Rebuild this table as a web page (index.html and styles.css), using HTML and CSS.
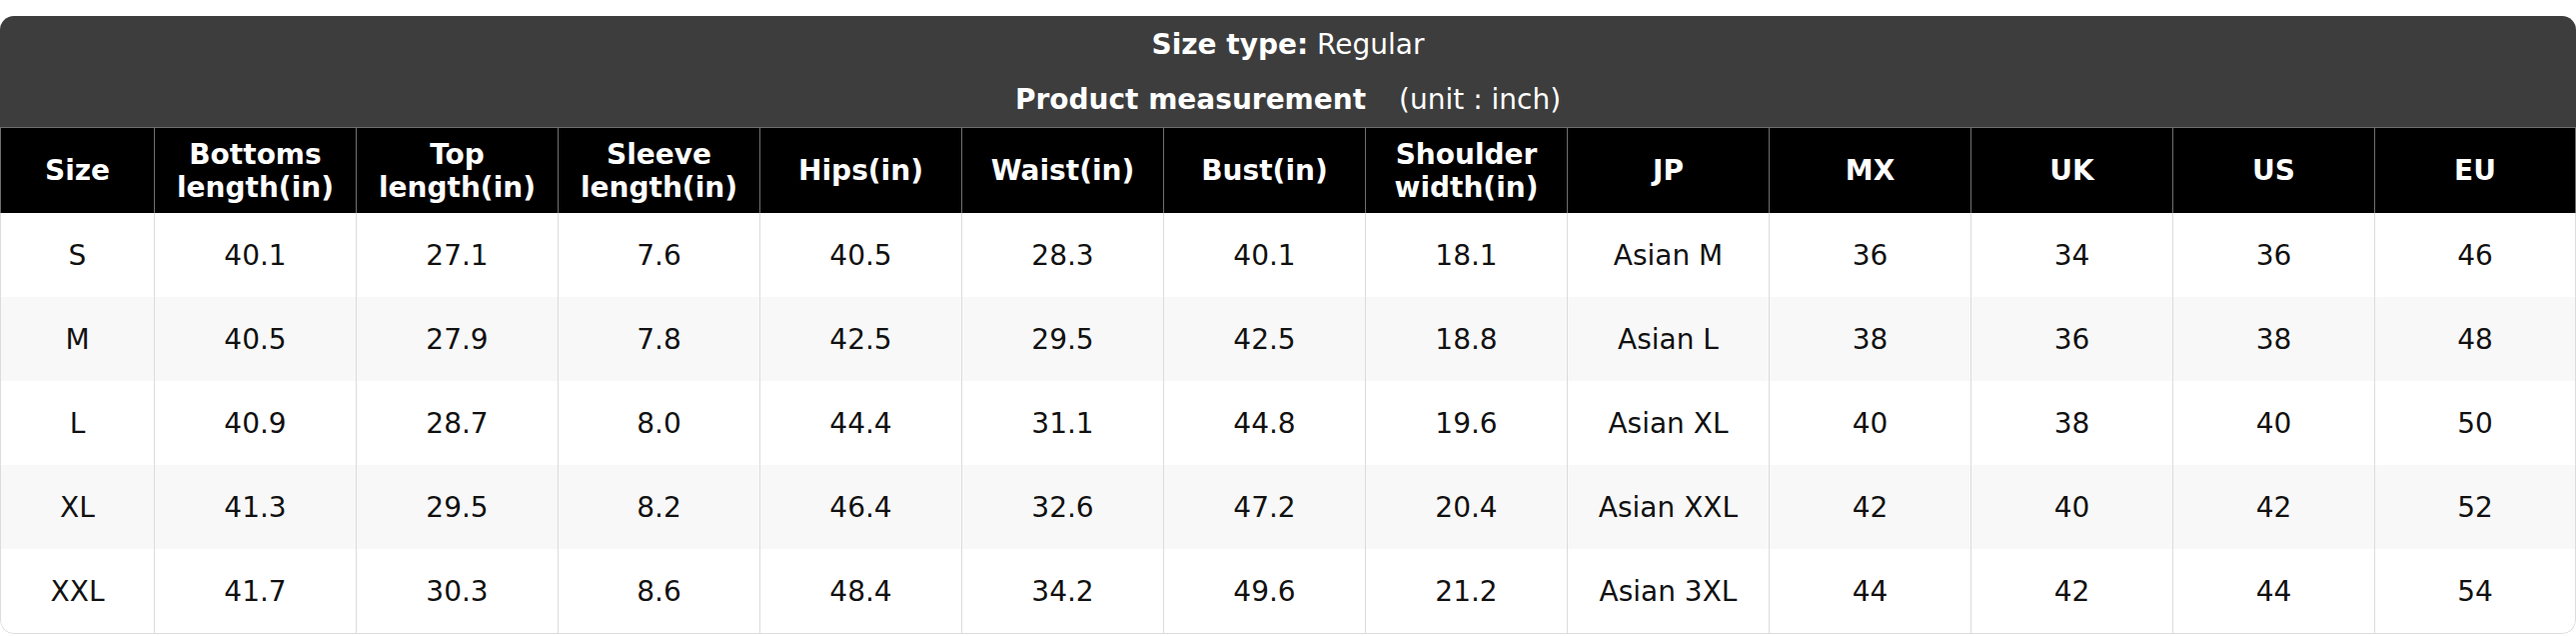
FILE: index.html
```html
<!DOCTYPE html>
<html lang="en">
<head>
<meta charset="utf-8">
<title>Size chart</title>
<link rel="stylesheet" href="styles.css">
</head>
<body>
<div class="chart">
  <div class="title-line first-line"><b>Size type:</b>&nbsp;Regular</div>
  <div class="title-line"><b>Product measurement</b><span class="unit">(unit : inch)</span></div>
  <table class="sizes">
    <thead>
      <tr>
        <th>Size</th>
        <th>Bottoms<br>length(in)</th>
        <th>Top<br>length(in)</th>
        <th>Sleeve<br>length(in)</th>
        <th>Hips(in)</th>
        <th>Waist(in)</th>
        <th>Bust(in)</th>
        <th>Shoulder<br>width(in)</th>
        <th>JP</th>
        <th>MX</th>
        <th>UK</th>
        <th>US</th>
        <th>EU</th>
      </tr>
    </thead>
    <tbody>
      <tr><td>S</td><td>40.1</td><td>27.1</td><td>7.6</td><td>40.5</td><td>28.3</td><td>40.1</td><td>18.1</td><td>Asian M</td><td>36</td><td>34</td><td>36</td><td>46</td></tr>
      <tr><td>M</td><td>40.5</td><td>27.9</td><td>7.8</td><td>42.5</td><td>29.5</td><td>42.5</td><td>18.8</td><td>Asian L</td><td>38</td><td>36</td><td>38</td><td>48</td></tr>
      <tr><td>L</td><td>40.9</td><td>28.7</td><td>8.0</td><td>44.4</td><td>31.1</td><td>44.8</td><td>19.6</td><td>Asian XL</td><td>40</td><td>38</td><td>40</td><td>50</td></tr>
      <tr><td>XL</td><td>41.3</td><td>29.5</td><td>8.2</td><td>46.4</td><td>32.6</td><td>47.2</td><td>20.4</td><td>Asian XXL</td><td>42</td><td>40</td><td>42</td><td>52</td></tr>
      <tr><td>XXL</td><td>41.7</td><td>30.3</td><td>8.6</td><td>48.4</td><td>34.2</td><td>49.6</td><td>21.2</td><td>Asian 3XL</td><td>44</td><td>42</td><td>44</td><td>54</td></tr>
    </tbody>
  </table>
</div>
</body>
</html>
```

FILE: styles.css
```css
html, body {
  margin: 0;
  padding: 0;
  background: #ffffff;
}

body {
  padding-top: 16px;
  font-family: "DejaVu Sans", "Liberation Sans", sans-serif;
  font-size: 28px;
  color: #111111;
}

.chart {
  border-radius: 14px;
  overflow: hidden;
}

.title-line {
  height: 55px;
  display: flex;
  align-items: center;
  justify-content: center;
  background: #3d3d3d;
  color: #ffffff;
  white-space: pre;
}

.title-line.first-line {
  height: 56px;
}

.title-line b {
  font-weight: bold;
}

.unit {
  margin-left: 33px;
}

.sizes {
  width: 100%;
  border-collapse: separate;
  border-spacing: 0;
  table-layout: fixed;
  background: #ffffff;
}

.sizes th,
.sizes td {
  box-sizing: border-box;
  padding: 0;
  text-align: center;
  vertical-align: middle;
}

.sizes th {
  height: 86px;
  background: #000000;
  color: #ffffff;
  font-weight: bold;
  line-height: 33px;
  border-top: 1px solid #6e6e6e;
  border-left: 1px solid #6e6e6e;
}

.sizes th:first-child {
  width: 154px;
}

.sizes th:last-child {
  border-right: 1px solid #6e6e6e;
}

.sizes td {
  height: 84px;
  border-left: 1px solid #dcdcdc;
  color: #111111;
}

.sizes td:last-child {
  border-right: 1px solid #dcdcdc;
}

.sizes tbody tr:nth-child(even) td {
  background: #f8f8f8;
}

.sizes tbody tr:last-child td {
  height: 85px;
  border-bottom: 1px solid #dcdcdc;
}

.sizes tbody tr:last-child td:first-child {
  border-bottom-left-radius: 14px;
}

.sizes tbody tr:last-child td:last-child {
  border-bottom-right-radius: 14px;
}
```
